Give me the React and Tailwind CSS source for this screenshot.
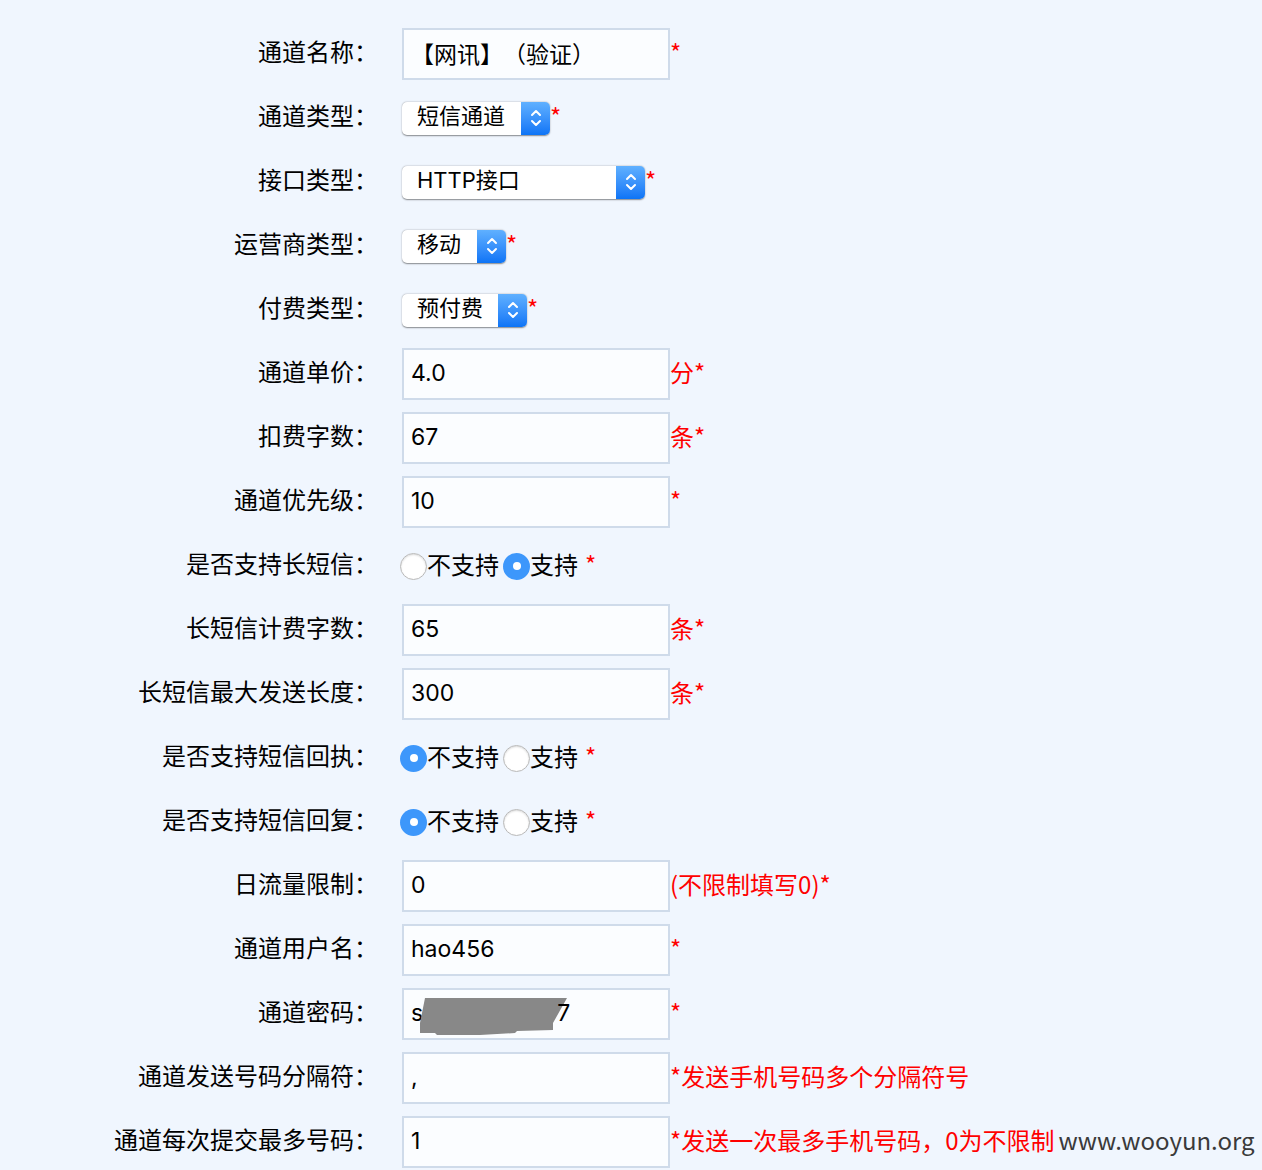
import React from 'react';

const font = { fontFamily: '"Noto Sans CJK SC", "Noto Sans", sans-serif' };
const latin = { fontFamily: 'Inter, "Noto Sans CJK SC", sans-serif' };

function Star({ children = '*' }) {
  return <span className="block pb-[5px] text-[24px] leading-none text-[#ff0000]">{children}</span>;
}

function TextBox({ value, children }) {
  return (
    <div
      className="relative flex h-[52px] w-[268px] items-center border-2 border-[#cfdbea] bg-[#fbfdff] px-[7px] pb-[2px] text-[23px] text-black"
      style={latin}
    >
      {children || value}
    </div>
  );
}

function Select({ value, width }) {
  return (
    <div
      className="flex h-[33px] items-stretch overflow-hidden rounded-[5px] bg-white shadow-[0_0.5px_1.5px_rgba(0,0,0,0.45)]"
      style={{ width }}
    >
      <div className="flex flex-1 items-center pb-[3px] pl-[15px] text-[22px] text-black" style={latin}>{value}</div>
      <div className="flex w-[29px] items-center justify-center bg-gradient-to-b from-[#5fb0ff] to-[#0b74f6]">
        <svg width="14" height="22" viewBox="0 0 14 22" fill="none" stroke="white" strokeWidth="2" strokeLinecap="round" strokeLinejoin="round">
          <path d="M3 8 L7 4 L11 8" />
          <path d="M3 14 L7 18 L11 14" />
        </svg>
      </div>
    </div>
  );
}

function Radio({ checked }) {
  if (checked) {
    return (
      <span className="flex h-[27px] w-[27px] items-center justify-center rounded-full bg-[#3d97fb]">
        <span className="h-[8px] w-[8px] rounded-full bg-white" />
      </span>
    );
  }
  return (
    <span className="h-[27px] w-[27px] rounded-full border border-[#b9b9b9] bg-white shadow-[inset_0_1px_2px_rgba(0,0,0,0.15)]" />
  );
}

function RadioPair({ first }) {
  return (
    <div className="-ml-[2px] flex items-center text-[24px] text-black">
      <Radio checked={first} />
      <span className="pb-[4px]">不支持</span>
      <span className="ml-[4px]" />
      <Radio checked={!first} />
      <span className="pb-[4px]">支持</span>
      <span className="ml-[7px] pb-[4px] text-[#ff0000]">*</span>
    </div>
  );
}

function Row({ label, children }) {
  return (
    <div className="flex h-16 items-center">
      <div className="w-[378px] pb-[6px] text-right text-[24px] text-black">{label}：</div>
      <div className="flex items-center pl-[24px]">{children}</div>
    </div>
  );
}

export default function App() {
  return (
    <div className="min-h-screen bg-[#f0f6fe] pt-[22px] [text-spacing-trim:space-all]" style={font}>
      <Row label="通道名称">
        <TextBox>
          <span style={font}>【网讯】（验证）</span>
        </TextBox>
        <Star />
      </Row>
      <Row label="通道类型">
        <Select value="短信通道" width={148} />
        <Star />
      </Row>
      <Row label="接口类型">
        <Select value="HTTP接口" width={243} />
        <Star />
      </Row>
      <Row label="运营商类型">
        <Select value="移动" width={104} />
        <Star />
      </Row>
      <Row label="付费类型">
        <Select value="预付费" width={125} />
        <Star />
      </Row>
      <Row label="通道单价">
        <TextBox value="4.0" />
        <Star>分*</Star>
      </Row>
      <Row label="扣费字数">
        <TextBox value="67" />
        <Star>条*</Star>
      </Row>
      <Row label="通道优先级">
        <TextBox value="10" />
        <Star />
      </Row>
      <Row label="是否支持长短信">
        <RadioPair first={false} />
      </Row>
      <Row label="长短信计费字数">
        <TextBox value="65" />
        <Star>条*</Star>
      </Row>
      <Row label="长短信最大发送长度">
        <TextBox value="300" />
        <Star>条*</Star>
      </Row>
      <Row label="是否支持短信回执">
        <RadioPair first={true} />
      </Row>
      <Row label="是否支持短信回复">
        <RadioPair first={true} />
      </Row>
      <Row label="日流量限制">
        <TextBox value="0" />
        <Star>(不限制填写0)*</Star>
      </Row>
      <Row label="通道用户名">
        <TextBox value="hao456" />
        <Star />
      </Row>
      <Row label="通道密码">
        <TextBox>
          <span>s</span>
          <svg className="absolute left-[16px] top-[8px]" width="148" height="38" viewBox="0 0 148 38">
            <polygon points="5,0 147,0 133,25 133,32 97,33 95,35 60,37 17,37 15,35 0,35 0,25" fill="#888888" />
          </svg>
          <span className="relative ml-[134px]">7</span>
        </TextBox>
        <Star />
      </Row>
      <Row label="通道发送号码分隔符">
        <TextBox value="," />
        <Star>*发送手机号码多个分隔符号</Star>
      </Row>
      <Row label="通道每次提交最多号码">
        <TextBox value="1" />
        <Star>*发送一次最多手机号码，0为不限制</Star>
        <span className="ml-[4px] pb-[5px] text-[24px] text-[#3a3a3a]">www.wooyun.org</span>
      </Row>
    </div>
  );
}
